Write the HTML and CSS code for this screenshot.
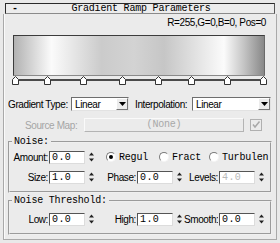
FILE: index.html
```html
<!DOCTYPE html>
<html lang="en">
<head>
<meta charset="utf-8">
<title>Gradient Ramp Parameters</title>
<link rel="stylesheet" href="styles.css">
</head>
<body>
<div class="rollout">
  <div class="rollout_title">
    <span class="collapse">-</span>
    <span class="title_text">Gradient Ramp Parameters</span>
    <span></span>
  </div>
  <div class="rollout_body">
    <div class="color_info">R=255,G=0,B=0, Pos=0</div>
    <div class="ramp"></div>
    <div class="flags">
      <span class="flag_line"></span>
      <svg class="flag" style="left:0px" width="8" height="9" viewBox="0 0 8 9"><path d="M0.5 3.5 L3.5 0.5 L6.5 3.5 L6.5 8.5 L0.5 8.5 Z" fill="#fff" stroke="#333"/></svg>
      <svg class="flag" style="left:32px" width="8" height="9" viewBox="0 0 8 9"><path d="M0.5 3.5 L3.5 0.5 L6.5 3.5 L6.5 8.5 L0.5 8.5 Z" fill="#fff" stroke="#333"/></svg>
      <svg class="flag" style="left:68px" width="8" height="9" viewBox="0 0 8 9"><path d="M0.5 3.5 L3.5 0.5 L6.5 3.5 L6.5 8.5 L0.5 8.5 Z" fill="#fff" stroke="#333"/></svg>
      <svg class="flag" style="left:107px" width="8" height="9" viewBox="0 0 8 9"><path d="M0.5 3.5 L3.5 0.5 L6.5 3.5 L6.5 8.5 L0.5 8.5 Z" fill="#fff" stroke="#333"/></svg>
      <svg class="flag" style="left:143px" width="8" height="9" viewBox="0 0 8 9"><path d="M0.5 3.5 L3.5 0.5 L6.5 3.5 L6.5 8.5 L0.5 8.5 Z" fill="#fff" stroke="#333"/></svg>
      <svg class="flag" style="left:176px" width="8" height="9" viewBox="0 0 8 9"><path d="M0.5 3.5 L3.5 0.5 L6.5 3.5 L6.5 8.5 L0.5 8.5 Z" fill="#fff" stroke="#333"/></svg>
      <svg class="flag" style="left:212px" width="8" height="9" viewBox="0 0 8 9"><path d="M0.5 3.5 L3.5 0.5 L6.5 3.5 L6.5 8.5 L0.5 8.5 Z" fill="#fff" stroke="#333"/></svg>
      <svg class="flag" style="left:248px" width="8" height="9" viewBox="0 0 8 9"><path d="M0.5 3.5 L3.5 0.5 L6.5 3.5 L6.5 8.5 L0.5 8.5 Z" fill="#fff" stroke="#333"/></svg>
    </div>

    <div class="row row_types">
      <span class="lbl lbl_type">Gradient Type:</span>
      <div class="dropdown dd_type"><span class="dd_text">Linear</span><span class="dd_btn"><svg width="7" height="4" viewBox="0 0 7 4"><path d="M0 0 H7 L3.5 4 Z" fill="#000"/></svg></span></div>
      <span class="lbl lbl_interp">Interpolation:</span>
      <div class="dropdown dd_interp"><span class="dd_text">Linear</span><span class="dd_btn"><svg width="7" height="4" viewBox="0 0 7 4"><path d="M0 0 H7 L3.5 4 Z" fill="#000"/></svg></span></div>
    </div>

    <div class="row row_source">
      <span class="lbl lbl_source">Source Map:</span>
      <div class="map_btn">(None)</div>
      <span class="checkbox"><svg width="10" height="10" viewBox="0 0 10 10"><path d="M2 4.5 L4 7 L8.5 1.5" fill="none" stroke="#a8a8a8" stroke-width="1.5"/></svg></span>
    </div>

    <fieldset class="group group_noise">
      <legend>Noise:</legend>
      <div class="row">
        <span class="lbl col1">Amount:</span>
        <span class="field">0.0</span>
        <span class="spin"><svg width="7" height="12" viewBox="0 0 7 12"><path d="M1 4.5 L3.5 1.5 L6 4.5 Z M1 7.5 L3.5 10.5 L6 7.5 Z" fill="#222"/></svg></span>
        <span class="radio radio_1 checked"></span><span class="radio_lbl rl_regular">Regul</span>
        <span class="radio radio_2"></span><span class="radio_lbl rl_fract">Fract</span>
        <span class="radio radio_3"></span><span class="radio_lbl rl_turb">Turbulen</span>
      </div>
      <div class="row row_second">
        <span class="lbl col1">Size:</span>
        <span class="field">1.0</span>
        <span class="spin"><svg width="7" height="12" viewBox="0 0 7 12"><path d="M1 4.5 L3.5 1.5 L6 4.5 Z M1 7.5 L3.5 10.5 L6 7.5 Z" fill="#222"/></svg></span>
        <span class="lbl col2">Phase:</span>
        <span class="field">0.0</span>
        <span class="spin"><svg width="7" height="12" viewBox="0 0 7 12"><path d="M1 4.5 L3.5 1.5 L6 4.5 Z M1 7.5 L3.5 10.5 L6 7.5 Z" fill="#222"/></svg></span>
        <span class="lbl col3">Levels:</span>
        <span class="field field_off">4.0</span>
        <span class="spin"><svg width="7" height="12" viewBox="0 0 7 12"><path d="M1 4.5 L3.5 1.5 L6 4.5 Z M1 7.5 L3.5 10.5 L6 7.5 Z" fill="#222"/></svg></span>
      </div>
    </fieldset>

    <fieldset class="group group_threshold">
      <legend>Noise Threshold:</legend>
      <div class="row">
        <span class="lbl col1">Low:</span>
        <span class="field">0.0</span>
        <span class="spin"><svg width="7" height="12" viewBox="0 0 7 12"><path d="M1 4.5 L3.5 1.5 L6 4.5 Z M1 7.5 L3.5 10.5 L6 7.5 Z" fill="#222"/></svg></span>
        <span class="lbl col2">High:</span>
        <span class="field">1.0</span>
        <span class="spin"><svg width="7" height="12" viewBox="0 0 7 12"><path d="M1 4.5 L3.5 1.5 L6 4.5 Z M1 7.5 L3.5 10.5 L6 7.5 Z" fill="#222"/></svg></span>
        <span class="lbl col3">Smooth:</span>
        <span class="field">0.0</span>
        <span class="spin"><svg width="7" height="12" viewBox="0 0 7 12"><path d="M1 4.5 L3.5 1.5 L6 4.5 Z M1 7.5 L3.5 10.5 L6 7.5 Z" fill="#222"/></svg></span>
      </div>
    </fieldset>
  </div>
</div>
</body>
</html>
```

FILE: styles.css
```css
html, body {
  margin: 0;
  padding: 0;
  background: #e9e9e9;
}

body {
  width: 280px;
  height: 243px;
  overflow: hidden;
  font-family: "Liberation Sans", Arial, sans-serif;
  font-size: 10px;
  letter-spacing: -0.4px;
  color: #000;
}

.rollout {
  margin: 0 3px;
  width: 274px;
}

.rollout_title {
  margin: 3px 2px 0 2px;
  height: 11px;
  box-sizing: border-box;
  display: grid;
  grid-template-columns: 1fr auto 1fr;
  align-items: center;
  background: #ececec;
  border-top: 1px solid #2a2a2a;
  border-left: 1px solid #2a2a2a;
  border-right: 1px solid #555;
  border-bottom: 1px solid #8a8a8a;
  font-family: "Liberation Mono", "Courier New", monospace;
  font-size: 10px;
  letter-spacing: -0.2px;
  line-height: 9px;
}

.collapse {
  padding-left: 6px;
  font-weight: bold;
}

.title_text {
  padding-left: 2px;
}

.rollout_body {
  box-sizing: border-box;
  height: 226px;
  border: 1px solid #a9a9a9;
  border-top: 0;
  box-shadow: inset 1px 0 0 #fafafa;
  background: #ebebeb;
  padding-top: 3px;
}

.color_info {
  height: 11px;
  line-height: 11px;
  text-align: right;
  padding-right: 10px;
}

.ramp {
  margin: 7px 0 0 9px;
  width: 252px;
  height: 41px;
  box-sizing: border-box;
  border-top: 1px solid #3c3c3c;
  border-left: 1px solid #3c3c3c;
  border-right: 1px solid #6a6a6a;
  border-bottom: 1px solid #8a8a8a;
  background: linear-gradient(to right, #b2b2b2 0%, #d4d4d4 7%, #fbfbfb 15%, #e8e8e8 23%, #cbcbcb 35%, #d3d3d3 48%, #c6c6c6 60%, #dcdcdc 70%, #fbfbfb 84%, #c4c4c4 92%, #888 100%);
}

.flags {
  position: relative;
  margin-left: 8px;
  width: 258px;
  height: 9px;
}

.flag_line {
  position: absolute;
  left: 4px;
  right: 4px;
  top: 3px;
  height: 2px;
  background: #4a4a4a;
}

.flag {
  position: absolute;
  top: 0;
  display: block;
}

.row {
  display: flex;
  align-items: center;
  height: 14px;
}

.row_types {
  margin-top: 12px;
}

.lbl {
  white-space: nowrap;
  overflow: hidden;
}

.lbl_type {
  margin-left: 4px;
  width: 63px;
}

.lbl_interp {
  margin-left: 6px;
  width: 57px;
}

.dropdown {
  display: flex;
  align-items: center;
  box-sizing: border-box;
  height: 14px;
  background: #fff;
  border-top: 1px solid #6e6e6e;
  border-left: 1px solid #6e6e6e;
  border-right: 1px solid #e2e2e2;
  border-bottom: 1px solid #e2e2e2;
}

.dd_type {
  width: 58px;
}

.dd_interp {
  width: 79px;
}

.dd_text {
  flex: 1;
  padding-left: 3px;
}

.dd_btn {
  width: 12px;
  height: 12px;
  box-sizing: border-box;
  display: flex;
  align-items: center;
  justify-content: center;
  background: #ececec;
  border-top: 1px solid #fff;
  border-left: 1px solid #fff;
  border-right: 1px solid #777;
  border-bottom: 1px solid #777;
}

.row_source {
  margin-top: 7px;
}

.lbl_source {
  margin-left: 21px;
  width: 59px;
  color: #a5a5a5;
}

.map_btn {
  width: 160px;
  height: 14px;
  box-sizing: border-box;
  border-top: 1px solid #fafafa;
  border-left: 1px solid #fafafa;
  border-right: 1px solid #b4b4b4;
  border-bottom: 1px solid #b4b4b4;
  text-align: center;
  line-height: 12px;
  font-family: "Liberation Mono", "Courier New", monospace;
  letter-spacing: -0.2px;
  color: #a8a8a8;
}

.checkbox {
  margin-left: 6px;
  width: 12px;
  height: 12px;
  box-sizing: border-box;
  border: 1px solid #b0b0b0;
  display: flex;
  align-items: center;
  justify-content: center;
}

.group {
  margin: 4px 0 0 4px;
  padding: 0 0 7px 0;
  width: 264px;
  min-width: 0;
  box-sizing: border-box;
  border: 2px groove #efefef;
}

.group legend {
  margin-left: 2px;
  padding: 0 2px;
  height: 12px;
  line-height: 12px;
  font-family: "Liberation Mono", "Courier New", monospace;
  letter-spacing: -0.2px;
}

.group_noise .row:first-of-type {
  margin-top: 2px;
}

.row_second {
  margin-top: 6px;
}

.group_threshold {
  margin-top: 2px;
}

.group_threshold .row {
  margin-top: 5px;
}

.col1 {
  width: 38px;
  text-align: right;
}

.col2 {
  width: 40px;
  text-align: right;
}

.col3 {
  width: 34px;
  text-align: right;
}

.field {
  margin-left: 1px;
  width: 36px;
  height: 13px;
  box-sizing: border-box;
  padding-left: 2px;
  background: #fff;
  border-top: 1px solid #555;
  border-left: 1px solid #555;
  border-right: 1px solid #dcdcdc;
  border-bottom: 1px solid #dcdcdc;
  font-family: "Liberation Mono", "Courier New", monospace;
  letter-spacing: 0.4px;
  line-height: 11px;
}

.field_off {
  color: #b9b9b9;
}

.spin {
  margin-left: 3px;
  width: 8px;
  height: 12px;
  display: flex;
  align-items: center;
}

.radio {
  width: 10px;
  height: 10px;
  box-sizing: border-box;
  border-radius: 50%;
  background: #fff;
  border: 1px solid;
  border-color: #7a7a7a #f4f4f4 #f4f4f4 #7a7a7a;
  display: flex;
  align-items: center;
  justify-content: center;
}

.radio.checked::after {
  content: "";
  width: 4px;
  height: 4px;
  border-radius: 50%;
  background: #000;
}

.radio_1 {
  margin-left: 10px;
}

.radio_2 {
  margin-left: 2px;
}

.radio_3 {
  margin-left: 6px;
}

.radio_lbl {
  margin-left: 3px;
  white-space: nowrap;
  font-family: "Liberation Mono", "Courier New", monospace;
  letter-spacing: -0.2px;
}

.rl_regular {
  width: 38px;
}

.rl_fract {
  width: 31px;
}

.rl_turb {
  width: 47px;
}
```
